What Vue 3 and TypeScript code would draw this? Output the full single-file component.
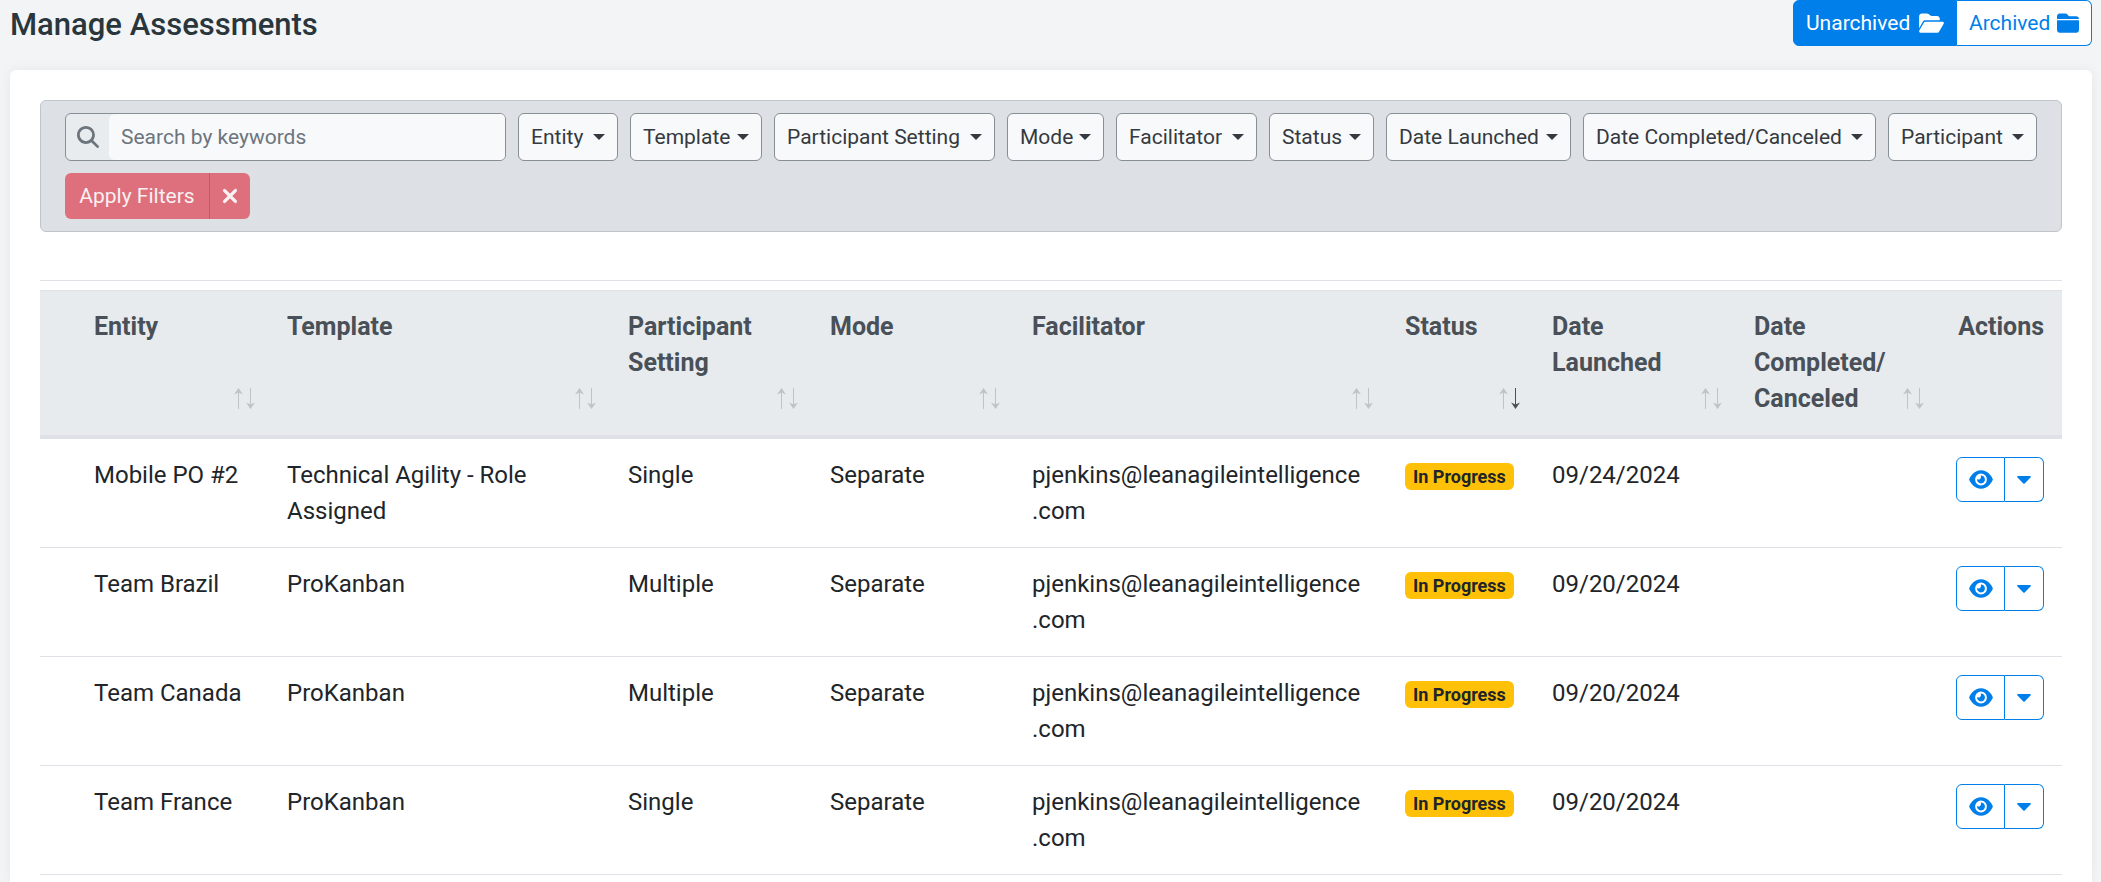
<script setup lang="ts">
import { ref } from 'vue'

type SortDirection = 'asc' | 'desc' | null

interface Column {
  key: string
  label: string
  width: number
  sort: SortDirection
}

interface Assessment {
  entity: string
  template: string
  setting: string
  mode: string
  facilitator: [string, string]
  status: string
  launched: string
  completed: string
}

const keywords = ref('')
const view = ref<'unarchived' | 'archived'>('unarchived')

const filters: string[] = [
  'Entity',
  'Template',
  'Participant Setting',
  'Mode',
  'Facilitator',
  'Status',
  'Date Launched',
  'Date Completed/Canceled',
  'Participant',
]

const columns: Column[] = [
  { key: 'entity', label: 'Entity', width: 193, sort: null },
  { key: 'template', label: 'Template', width: 341, sort: null },
  { key: 'setting', label: 'Participant\nSetting', width: 202, sort: null },
  { key: 'mode', label: 'Mode', width: 202, sort: null },
  { key: 'facilitator', label: 'Facilitator', width: 373, sort: null },
  { key: 'status', label: 'Status', width: 147, sort: 'desc' },
  { key: 'launched', label: 'Date\nLaunched', width: 202, sort: null },
  { key: 'completed', label: 'Date\nCompleted/\nCanceled', width: 202, sort: null },
]

const facilitator: [string, string] = ['pjenkins@leanagileintelligence', '.com']

const rows: Assessment[] = [
  { entity: 'Mobile PO #2', template: 'Technical Agility - Role Assigned', setting: 'Single', mode: 'Separate', facilitator, status: 'In Progress', launched: '09/24/2024', completed: '' },
  { entity: 'Team Brazil', template: 'ProKanban', setting: 'Multiple', mode: 'Separate', facilitator, status: 'In Progress', launched: '09/20/2024', completed: '' },
  { entity: 'Team Canada', template: 'ProKanban', setting: 'Multiple', mode: 'Separate', facilitator, status: 'In Progress', launched: '09/20/2024', completed: '' },
  { entity: 'Team France', template: 'ProKanban', setting: 'Single', mode: 'Separate', facilitator, status: 'In Progress', launched: '09/20/2024', completed: '' },
]
</script>

<template>
  <div class="page">
    <header class="page-header">
      <h1>Manage Assessments</h1>
      <div class="btn-group" role="group" aria-label="Archive state">
        <button type="button" class="toggle" :class="{ active: view === 'unarchived' }" @click="view = 'unarchived'">
          Unarchived
          <svg class="icon-open" viewBox="0 0 576 512" aria-hidden="true"><path d="M88.7 223.8L0 375.8V96C0 60.7 28.7 32 64 32H181.5c17 0 33.3 6.7 45.3 18.7l26.5 26.5c12 12 28.3 18.7 45.3 18.7H416c35.3 0 64 28.7 64 64v32H144c-22.8 0-43.8 12.1-55.3 31.8zm27.6 16.1C122.1 230 132.6 224 144 224H544c11.5 0 22 6.1 27.7 16.1s5.7 22.2-.1 32.1l-112 192C453.9 474 443.4 480 432 480H32c-11.5 0-22-6.1-27.7-16.1s-5.7-22.2 .1-32.1l112-192z" /></svg>
        </button>
        <button type="button" class="toggle" :class="{ active: view === 'archived' }" @click="view = 'archived'">
          Archived
          <svg class="icon-closed" viewBox="0 0 512 512" aria-hidden="true"><path d="M448 480H64c-35.3 0-64-28.7-64-64V192H512V416c0 35.3-28.7 64-64 64zm64-320H0V96C0 60.7 28.7 32 64 32H192c20.1 0 39.1 9.5 51.2 25.6l19.2 25.6c6 8.1 15.5 12.8 25.6 12.8H448c35.3 0 64 28.7 64 64z" /></svg>
        </button>
      </div>
    </header>

    <main class="card">
      <form class="filters" @submit.prevent>
        <div class="filter-row">
          <div class="search">
            <label for="keywords" aria-label="Search by keywords">
              <svg viewBox="0 0 512 512" aria-hidden="true"><path d="M416 208c0 45.9-14.9 88.3-40 122.7L502.6 457.4c12.5 12.5 12.5 32.8 0 45.3s-32.8 12.5-45.3 0L330.7 376c-34.4 25.2-76.8 40-122.7 40C93.1 416 0 322.9 0 208S93.1 0 208 0S416 93.1 416 208zM208 352a144 144 0 1 0 0-288 144 144 0 1 0 0 288z" /></svg>
            </label>
            <input id="keywords" v-model="keywords" type="text" placeholder="Search by keywords" />
          </div>
          <button v-for="name in filters" :key="name" type="button" class="filter" aria-haspopup="true">
            {{ name }}<span class="caret"></span>
          </button>
        </div>
        <div class="apply">
          <button type="submit">Apply Filters</button>
          <button type="button" aria-label="Clear filters">
            <svg viewBox="0 0 320 512" aria-hidden="true"><path d="M310.6 150.6c12.5-12.5 12.5-32.8 0-45.3s-32.8-12.5-45.3 0L160 210.7 54.6 105.4c-12.5-12.5-32.8-12.5-45.3 0s-12.5 32.8 0 45.3L114.7 256 9.4 361.4c-12.5 12.5-12.5 32.8 0 45.3s32.8 12.5 45.3 0L160 301.3 265.4 406.6c12.5 12.5 32.8 12.5 45.3 0s12.5-32.8 0-45.3L205.3 256 310.6 150.6z" /></svg>
          </button>
        </div>
      </form>

      <hr />

      <table>
        <colgroup>
          <col class="col-lead" />
          <col v-for="c in columns" :key="c.key" :style="{ width: c.width + 'px' }" />
          <col class="col-actions" />
        </colgroup>
        <thead>
          <tr>
            <th></th>
            <th v-for="c in columns" :key="c.key" scope="col" :aria-sort="c.sort === 'desc' ? 'descending' : 'none'">
              <button type="button" class="sort">
                <span class="label">{{ c.label }}</span>
                <svg viewBox="0 0 24 24" aria-hidden="true">
                  <g :class="{ on: c.sort === 'asc' }"><path class="shaft" d="M6.5 3V22" /><path class="head" d="M6.5 1L11 7.5L6.5 5.5L2 7.5Z" /></g>
                  <g :class="{ on: c.sort === 'desc' }"><path class="shaft" d="M18.5 1V20" /><path class="head" d="M18.5 22L23 15.5L18.5 17.5L14 15.5Z" /></g>
                </svg>
              </button>
            </th>
            <th scope="col" class="actions-head">Actions</th>
          </tr>
        </thead>
        <tbody>
          <tr v-for="r in rows" :key="r.entity">
            <td></td>
            <td>{{ r.entity }}</td>
            <td>{{ r.template }}</td>
            <td>{{ r.setting }}</td>
            <td>{{ r.mode }}</td>
            <td>{{ r.facilitator[0] }}<wbr />{{ r.facilitator[1] }}</td>
            <td><span class="badge">{{ r.status }}</span></td>
            <td>{{ r.launched }}</td>
            <td>{{ r.completed }}</td>
            <td>
              <div class="actions">
                <button type="button" :aria-label="'View ' + r.entity">
                  <svg class="eye" viewBox="0 0 576 512" aria-hidden="true"><path d="M288 32c-80.8 0-145.5 36.8-192.6 80.6C48.6 156 17.3 208 2.5 243.7c-3.3 7.9-3.3 16.7 0 24.6C17.3 304 48.6 356 95.4 399.4C142.5 443.2 207.2 480 288 480s145.5-36.8 192.6-80.6c46.8-43.5 78.1-95.4 93-131.1c3.3-7.9 3.3-16.7 0-24.6c-14.9-35.7-46.2-87.7-93-131.1C433.5 68.8 368.8 32 288 32zM144 256a144 144 0 1 1 288 0 144 144 0 1 1 -288 0zm144-64c0 35.3-28.7 64-64 64c-7.1 0-13.9-1.2-20.3-3.3c-5.5-1.8-11.9 1.6-11.7 7.4c.3 6.9 1.3 13.8 3.2 20.7c13.7 51.2 66.4 81.6 117.6 67.9s81.6-66.4 67.9-117.6c-11.1-41.5-47.8-69.4-88.6-71.1c-5.8-.2-9.2 6.1-7.4 11.7c2.1 6.4 3.3 13.2 3.3 20.3z" /></svg>
                </button>
                <button type="button" aria-haspopup="true" :aria-label="'More actions for ' + r.entity">
                  <svg class="more" viewBox="0 0 14 8" aria-hidden="true"><path d="M1 0H13Q14.4 0.4 13.5 1.4L7.7 7.5Q7 8.2 6.3 7.5L0.5 1.4Q-0.4 0.4 1 0Z" /></svg>
                </button>
              </div>
            </td>
          </tr>
        </tbody>
      </table>
    </main>
  </div>
</template>

<style>
body {
  background: #f3f4f6;
}
</style>

<style scoped>
* {
  box-sizing: border-box;
}

.page {
  display: flex;
  flex-direction: column;
  min-height: 100vh;
  padding: 0 9px 0 10px;
  font-family: Roboto, 'Open Sans', sans-serif;
  font-size: 24px;
  line-height: 36px;
  color: #212529;
}

button,
input {
  font: inherit;
  color: inherit;
}

button {
  cursor: pointer;
}

svg {
  display: block;
  flex: none;
  fill: currentColor;
}

.page-header {
  display: flex;
  justify-content: space-between;
  align-items: flex-start;
  height: 70px;
}

h1 {
  margin: 0;
  padding-top: 7px;
  font-size: 31px;
  font-weight: 500;
  color: #29363c;
}

.btn-group {
  display: flex;
}

.toggle {
  display: flex;
  align-items: center;
  justify-content: space-between;
  width: 135px;
  height: 46px;
  padding: 0 12px;
  border: 1px solid #007fea;
  background: #fff;
  color: #007fea;
  font-size: 21px;
  line-height: 30px;
}

.toggle:first-child {
  width: 164px;
  border-radius: 6px 0 0 6px;
}

.toggle:last-child {
  border-left: 0;
  border-radius: 0 6px 6px 0;
}

.toggle.active {
  background: #007fea;
  color: #fff;
}

.icon-open {
  width: 25px;
  height: 22px;
}

.icon-closed {
  width: 22px;
  height: 22px;
}

.card {
  flex: 1;
  padding: 30px 30px 0;
  border-radius: 6px 6px 0 0;
  background: #fff;
  box-shadow: 0 0 12px rgba(0, 0, 0, 0.06);
}

.filters {
  padding: 12px 24px;
  border: 1px solid #bfc5ca;
  border-radius: 6px;
  background: #dde1e5;
}

.filter-row {
  display: grid;
  grid-template-columns: 441fr 100fr 132fr 221fr 97fr 141fr 105fr 185fr 293fr 149fr;
  gap: 12px;
  margin-bottom: 12px;
}

.search {
  display: flex;
  height: 48px;
  overflow: hidden;
  border: 1px solid #868e96;
  border-radius: 6px;
  background: #e9ecef;
}

.search label {
  display: flex;
  align-items: center;
  justify-content: center;
  width: 43px;
  color: #6c757d;
}

.search label svg {
  width: 22px;
  height: 22px;
}

.search input {
  flex: 1;
  min-width: 0;
  padding: 0 12px;
  border: 0;
  border-radius: 6px 0 0 6px;
  outline: 0;
  background: #f8f9fb;
  font-size: 21px;
}

.search input::placeholder {
  color: #6c757d;
  opacity: 1;
}

.filter {
  display: flex;
  align-items: center;
  justify-content: space-between;
  height: 48px;
  padding: 0 12px;
  border: 1px solid #868e96;
  border-radius: 6px;
  background: #f8f9fb;
  color: #343a40;
  font-size: 21px;
  white-space: nowrap;
}

.caret {
  border: 6px solid transparent;
  border-top-color: #343a40;
  border-bottom: 0;
}

.apply {
  display: flex;
}

.apply button {
  display: flex;
  align-items: center;
  justify-content: center;
  width: 40px;
  height: 46px;
  padding: 0;
  border: 0;
  border-radius: 0 6px 6px 0;
  background: #de6f7c;
  color: #f9f0f2;
  font-size: 21px;
}

.apply button:first-child {
  width: 145px;
  border-right: 1px solid #dd4f60;
  border-radius: 6px 0 0 6px;
}

.apply svg {
  width: 14px;
  height: 22px;
  stroke: currentColor;
  stroke-width: 16px;
}

hr {
  height: 1px;
  margin: 48px 0 9px;
  border: 0;
  background: #dee2e6;
}

table {
  width: 100%;
  table-layout: fixed;
  border-spacing: 0;
}

.col-lead {
  width: 36px;
}

.col-actions {
  width: 124px;
}

th,
td {
  padding: 18px;
  text-align: left;
  vertical-align: top;
}

th {
  padding-right: 13px;
  border-top: 1px solid #dee2e6;
  border-bottom: 4px solid #dee2e6;
  background: #e7ebee;
  color: #495057;
  font-size: 25px;
  font-weight: 700;
}

td {
  border-bottom: 1px solid #dee2e6;
}

.sort {
  display: flex;
  align-items: flex-start;
  justify-content: space-between;
  width: 100%;
  min-height: 108px;
  padding: 0;
  border: 0;
  background: none;
  text-align: left;
}

.label {
  white-space: pre-line;
}

.sort svg {
  align-self: flex-end;
  width: 24px;
  height: 24px;
  margin-bottom: 6px;
}

.sort g {
  opacity: 0.25;
}

.sort g.on {
  opacity: 1;
}

.shaft {
  fill: none;
  stroke: currentColor;
}

.actions-head {
  padding-right: 18px;
  text-align: right;
}

.badge {
  display: block;
  width: fit-content;
  margin-top: 6px;
  padding: 0 8px;
  border-radius: 6px;
  background: #ffc107;
  font-size: 18px;
  font-weight: 700;
  line-height: 27px;
  white-space: nowrap;
}

.actions {
  display: flex;
  justify-content: flex-end;
}

.actions button {
  display: flex;
  align-items: center;
  justify-content: center;
  width: 39px;
  height: 45px;
  padding: 0;
  border: 1px solid #007fea;
  border-left: 0;
  border-radius: 0 6px 6px 0;
  background: #fff;
  color: #007fea;
}

.actions button:first-child {
  width: 49px;
  border-left: 1px solid #007fea;
  border-radius: 6px 0 0 6px;
}

.eye {
  width: 24px;
  height: 21px;
}

.more {
  width: 14px;
  height: 8px;
}
</style>
